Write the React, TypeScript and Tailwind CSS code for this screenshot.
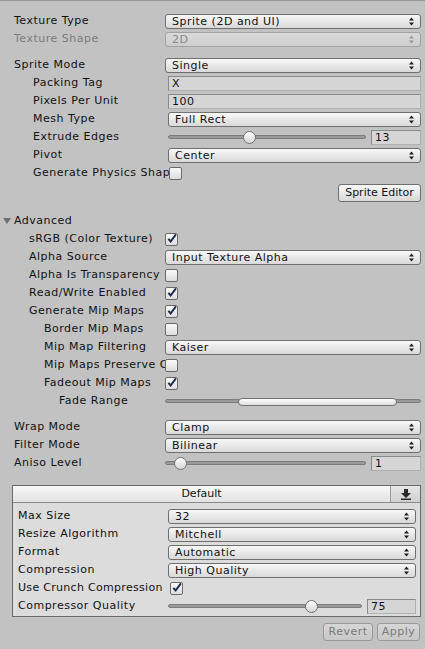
import React from "react";

const Arrows = ({ dim }: { dim?: boolean }) => (
  <svg width="5" height="9" viewBox="0 0 5 9">
    <path d="M2.5 0.5L5 3.5H0z M2.5 8.5L0 5.5H5z" fill={dim ? "#9a9a9a" : "#1e1e1e"} />
  </svg>
);

const Dropdown = ({ value, dim }: { value: string; dim?: boolean }) => (
  <div
    className={
      dim
        ? "flex h-[15px] flex-1 items-center justify-between rounded-[3px] border border-[#a3a3a3] bg-linear-to-b from-[#dadada] to-[#cdcdcd] pl-[6px] pr-[6px] text-[#8a8a8a]"
        : "flex h-[15px] flex-1 items-center justify-between rounded-[3px] border border-[#6f6f6f] bg-linear-to-b from-[#f8f8f8] to-[#d9d9d9] pl-[6px] pr-[6px] text-[#111]"
    }
  >
    <span className="leading-none">{value}</span>
    <Arrows dim={dim} />
  </div>
);

const TextField = ({ value }: { value: string }) => (
  <div className="flex h-[15px] flex-1 items-center border border-[#8a8a8a] border-b-[#b0b0b0] border-r-[#b0b0b0] bg-[#d5d5d5] pl-[3px] leading-none">
    {value}
  </div>
);

const Checkbox = ({ checked }: { checked?: boolean }) => (
  <div className="flex h-[13px] w-[13px] shrink-0 items-center justify-center rounded-[2px] border border-[#6a6a6a] bg-linear-to-b from-[#fafafa] to-[#dcdcdc]">
    {checked && (
      <svg width="11" height="11" viewBox="0 0 11 11" className="-mt-[2px] ml-[1px]">
        <path d="M1.5 6L4 8.8L9.8 1" stroke="#1b2b4d" strokeWidth="2.2" fill="none" />
      </svg>
    )}
  </div>
);

const Slider = ({ pos, value, trackW }: { pos: number; value: string; trackW: string }) => (
  <div className="flex flex-1 items-center gap-[5px]">
    <div className={"relative flex h-[15px] items-center " + trackW}>
      <div className="h-[4px] w-full rounded-full border border-[#7d7d7d] bg-[#9a9a9a]" />
      <div
        className="absolute top-[1px] h-[13px] w-[13px] rounded-full border border-[#727272] bg-linear-to-b from-[#fdfdfd] to-[#d6d6d6]"
        style={{ left: pos - 6 }}
      />
    </div>
    <TextField value={value} />
  </div>
);

const Label = ({ children, cls }: { children: React.ReactNode; cls: string }) => (
  <div className={"shrink-0 overflow-hidden whitespace-nowrap " + cls}>{children}</div>
);

export default function App() {
  return (
    <div className="h-[649px] w-[425px] overflow-hidden border-t border-[#959595] bg-[#c2c2c2] font-['DejaVu_Sans',sans-serif] text-[11px] tracking-[0.5px] text-[#111]">
      <div className="pt-[11px]">
        <div className="flex h-[18px] items-center pr-[4px]">
          <Label cls="w-[165px] pl-[14px]">Texture Type</Label>
          <Dropdown value="Sprite (2D and UI)" />
        </div>
        <div className="flex h-[18px] items-center pr-[4px]">
          <Label cls="w-[165px] pl-[14px] text-[#7c7c7c]">Texture Shape</Label>
          <Dropdown value="2D" dim />
        </div>

        <div className="mt-[8px] flex h-[18px] items-center pr-[4px]">
          <Label cls="w-[165px] pl-[14px]">Sprite Mode</Label>
          <Dropdown value="Single" />
        </div>
        <div className="flex h-[18px] items-center pr-[4px]">
          <Label cls="w-[168px] pl-[33px]">Packing Tag</Label>
          <TextField value="X" />
        </div>
        <div className="flex h-[18px] items-center pr-[4px]">
          <Label cls="w-[168px] pl-[33px]">Pixels Per Unit</Label>
          <TextField value="100" />
        </div>
        <div className="flex h-[18px] items-center pr-[4px]">
          <Label cls="w-[168px] pl-[33px]">Mesh Type</Label>
          <Dropdown value="Full Rect" />
        </div>
        <div className="flex h-[18px] items-center pr-[4px]">
          <Label cls="w-[168px] pl-[33px]">Extrude Edges</Label>
          <Slider pos={81} value="13" trackW="w-[198px]" />
        </div>
        <div className="flex h-[18px] items-center pr-[4px]">
          <Label cls="w-[168px] pl-[33px]">Pivot</Label>
          <Dropdown value="Center" />
        </div>
        <div className="flex h-[18px] items-center pr-[4px]">
          <Label cls="w-[169px] pl-[33px]">Generate Physics Shape</Label>
          <Checkbox />
        </div>

        <div className="mt-[2px] flex justify-end pr-[4px]">
          <div className="flex h-[18px] w-[83px] items-center justify-center rounded-[3px] border border-[#6f6f6f] bg-linear-to-b from-[#f8f8f8] to-[#d9d9d9] tracking-normal">
            Sprite Editor
          </div>
        </div>

        <div className="mt-[10px] flex h-[18px] items-center">
          <svg width="14" height="10" viewBox="0 0 14 10" className="ml-[3px]">
            <path d="M0 2H8L4 8z" fill="#6f6f6f" />
          </svg>
          <span className="-ml-[3px]">Advanced</span>
        </div>
        <div className="flex h-[18px] items-center pr-[4px]">
          <Label cls="w-[165px] pl-[29px]">sRGB (Color Texture)</Label>
          <Checkbox checked />
        </div>
        <div className="flex h-[18px] items-center pr-[4px]">
          <Label cls="w-[165px] pl-[29px]">Alpha Source</Label>
          <Dropdown value="Input Texture Alpha" />
        </div>
        <div className="flex h-[18px] items-center pr-[4px]">
          <Label cls="w-[165px] pl-[29px]">Alpha Is Transparency</Label>
          <Checkbox />
        </div>
        <div className="flex h-[18px] items-center pr-[4px]">
          <Label cls="w-[165px] pl-[29px]">Read/Write Enabled</Label>
          <Checkbox checked />
        </div>
        <div className="flex h-[18px] items-center pr-[4px]">
          <Label cls="w-[165px] pl-[29px]">Generate Mip Maps</Label>
          <Checkbox checked />
        </div>
        <div className="flex h-[18px] items-center pr-[4px]">
          <Label cls="w-[165px] pl-[44px]">Border Mip Maps</Label>
          <Checkbox />
        </div>
        <div className="flex h-[18px] items-center pr-[4px]">
          <Label cls="w-[165px] pl-[44px]">Mip Map Filtering</Label>
          <Dropdown value="Kaiser" />
        </div>
        <div className="flex h-[18px] items-center pr-[4px]">
          <Label cls="w-[165px] pl-[44px]">Mip Maps Preserve Coverage</Label>
          <Checkbox />
        </div>
        <div className="flex h-[18px] items-center pr-[4px]">
          <Label cls="w-[165px] pl-[44px]">Fadeout Mip Maps</Label>
          <Checkbox checked />
        </div>
        <div className="flex h-[18px] items-center pr-[4px]">
          <Label cls="w-[165px] pl-[59px]">Fade Range</Label>
          <div className="relative flex h-[15px] flex-1 items-center">
            <div className="h-[4px] w-full rounded-full border border-[#7d7d7d] bg-[#9a9a9a]" />
            <div className="absolute left-[73px] top-[4px] h-[8px] w-[159px] rounded-[4px] border border-[#727272] bg-linear-to-b from-[#fdfdfd] to-[#dedede]" />
          </div>
        </div>

        <div className="mt-[8px] flex h-[18px] items-center pr-[4px]">
          <Label cls="w-[165px] pl-[14px]">Wrap Mode</Label>
          <Dropdown value="Clamp" />
        </div>
        <div className="flex h-[18px] items-center pr-[4px]">
          <Label cls="w-[165px] pl-[14px]">Filter Mode</Label>
          <Dropdown value="Bilinear" />
        </div>
        <div className="flex h-[18px] items-center pr-[4px]">
          <Label cls="w-[165px] pl-[14px]">Aniso Level</Label>
          <Slider pos={15} value="1" trackW="w-[201px]" />
        </div>

        <div className="ml-[12px] mr-[4px] mt-[13px] border border-[#6a6a6a] bg-[#dcdcdc]">
          <div className="flex h-[17px] border-b border-[#8a8a8a] bg-linear-to-b from-[#f9f9f9] to-[#e2e2e2]">
            <div className="flex flex-1 items-center justify-center tracking-normal">Default</div>
            <div className="flex w-[30px] items-center justify-center border-l border-[#9a9a9a] bg-linear-to-b from-[#e8e8e8] to-[#cfcfcf]">
              <svg width="10" height="11" viewBox="0 0 10 11">
                <path d="M3 0H7V4H10L5 9L0 4H3z" fill="#2a2a2a" />
                <rect x="0" y="9.5" width="10" height="1.5" fill="#2a2a2a" />
              </svg>
            </div>
          </div>
          <div className="pb-[1px] pt-[4px]">
            <div className="flex h-[18px] items-center pr-[4px]">
              <Label cls="w-[155px] pl-[5px]">Max Size</Label>
              <Dropdown value="32" />
            </div>
            <div className="flex h-[18px] items-center pr-[4px]">
              <Label cls="w-[155px] pl-[5px]">Resize Algorithm</Label>
              <Dropdown value="Mitchell" />
            </div>
            <div className="flex h-[18px] items-center pr-[4px]">
              <Label cls="w-[155px] pl-[5px]">Format</Label>
              <Dropdown value="Automatic" />
            </div>
            <div className="flex h-[18px] items-center pr-[4px]">
              <Label cls="w-[155px] pl-[5px]">Compression</Label>
              <Dropdown value="High Quality" />
            </div>
            <div className="flex h-[18px] items-center pr-[4px]">
              <Label cls="w-[157px] pl-[5px] tracking-[0.3px]">Use Crunch Compression</Label>
              <Checkbox checked />
            </div>
            <div className="flex h-[18px] items-center pr-[4px]">
              <Label cls="w-[155px] pl-[5px]">Compressor Quality</Label>
              <Slider pos={143} value="75" trackW="w-[194px]" />
            </div>
          </div>
        </div>

        <div className="mt-[6px] flex justify-end gap-[4px] pr-[5px]">
          <div className="flex h-[18px] w-[50px] items-center justify-center rounded-[3px] border border-[#9a9a9a] bg-linear-to-b from-[#d6d6d6] to-[#c8c8c8] text-[#7a7a7a]">
            Revert
          </div>
          <div className="flex h-[18px] w-[43px] items-center justify-center rounded-[3px] border border-[#9a9a9a] bg-linear-to-b from-[#d6d6d6] to-[#c8c8c8] text-[#7a7a7a]">
            Apply
          </div>
        </div>
      </div>
    </div>
  );
}
